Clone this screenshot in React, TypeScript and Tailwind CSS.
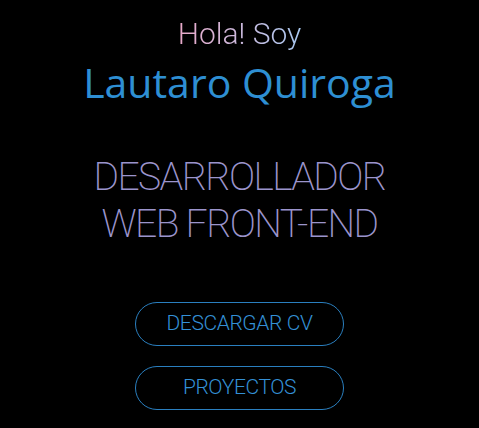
import React from 'react';

const App = () => {
  return (
    <div className="min-h-screen w-full bg-black flex flex-col items-center pt-[14px] font-['Roboto',sans-serif]">
      <p className="text-[30px] font-light leading-[40px] bg-gradient-to-r from-[#e8a8c8] to-[#a8c8f0] bg-clip-text text-transparent">
        Hola! Soy
      </p>
      <h1 className="mt-[4px] text-[41px] leading-[48px] text-[#2e8fd3] font-['Open_Sans',sans-serif]">
        Lautaro Quiroga
      </h1>
      <h2 className="mt-[48px] text-center text-[39px] leading-[47px] font-extralight text-[#9b94cc] tracking-[-1.6px]">
        DESARROLLADOR
        <br />
        WEB FRONT-END
      </h2>
      <div className="mt-[54px] flex flex-col items-center gap-[20px]">
        <button className="w-[209px] h-[44px] rounded-full border border-[#2a7fbf] text-[21px] text-[#3490d6] font-light tracking-[-0.4px]">
          DESCARGAR CV
        </button>
        <button className="w-[209px] h-[44px] rounded-full border border-[#2a7fbf] text-[21px] text-[#3490d6] font-light tracking-[-0.4px]">
          PROYECTOS
        </button>
      </div>
    </div>
  );
};

export default App;
